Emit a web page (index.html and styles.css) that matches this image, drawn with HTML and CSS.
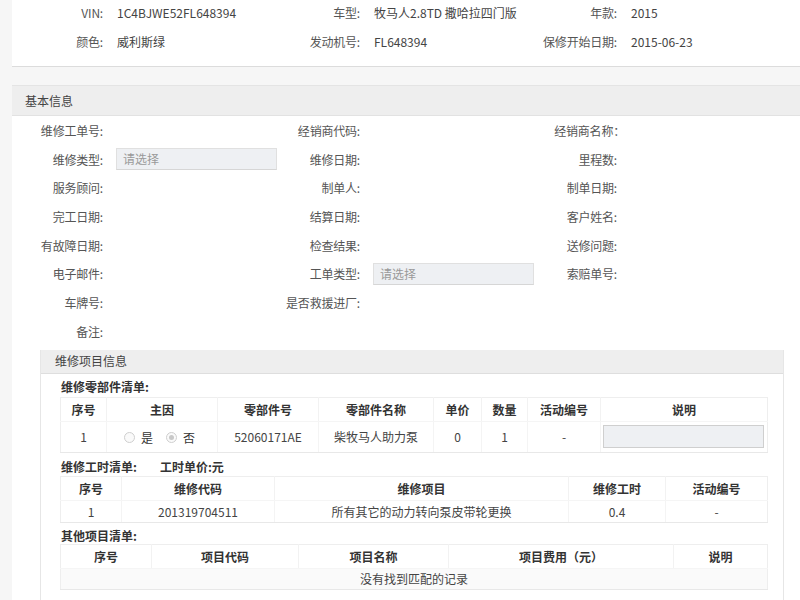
FILE: index.html
```html
<!DOCTYPE html>
<html lang="zh-CN">
<head>
<meta charset="utf-8">
<link rel="stylesheet" href="styles.css">
</head>
<body>
<div class="page">
  <div class="vehicle">
    <div class="grid3 vrow">
      <div class="field"><span class="lbl">VIN:</span><span class="val">1C4BJWE52FL648394</span></div>
      <div class="field"><span class="lbl">车型:</span><span class="val">牧马人2.8TD 撒哈拉四门版</span></div>
      <div class="field"><span class="lbl">年款:</span><span class="val">2015</span></div>
    </div>
    <div class="grid3 vrow">
      <div class="field"><span class="lbl">颜色:</span><span class="val">威利斯绿</span></div>
      <div class="field"><span class="lbl">发动机号:</span><span class="val">FL648394</span></div>
      <div class="field"><span class="lbl">保修开始日期:</span><span class="val">2015-06-23</span></div>
    </div>
  </div>

  <div class="basic">
    <div class="bar">基本信息</div>
    <div class="form">
      <div class="grid3 frow">
        <div class="field"><span class="lbl">维修工单号:</span></div>
        <div class="field"><span class="lbl">经销商代码:</span></div>
        <div class="field"><span class="lbl wide">经销商名称：</span></div>
      </div>
      <div class="grid3 frow">
        <div class="field"><span class="lbl">维修类型:</span><span class="select">请选择</span></div>
        <div class="field"><span class="lbl">维修日期:</span></div>
        <div class="field"><span class="lbl">里程数:</span></div>
      </div>
      <div class="grid3 frow">
        <div class="field"><span class="lbl">服务顾问:</span></div>
        <div class="field"><span class="lbl">制单人:</span></div>
        <div class="field"><span class="lbl">制单日期:</span></div>
      </div>
      <div class="grid3 frow">
        <div class="field"><span class="lbl">完工日期:</span></div>
        <div class="field"><span class="lbl">结算日期:</span></div>
        <div class="field"><span class="lbl">客户姓名:</span></div>
      </div>
      <div class="grid3 frow">
        <div class="field"><span class="lbl">有故障日期:</span></div>
        <div class="field"><span class="lbl">检查结果:</span></div>
        <div class="field"><span class="lbl">送修问题:</span></div>
      </div>
      <div class="grid3 frow">
        <div class="field"><span class="lbl">电子邮件:</span></div>
        <div class="field"><span class="lbl">工单类型:</span><span class="select">请选择</span></div>
        <div class="field"><span class="lbl">索赔单号:</span></div>
      </div>
      <div class="grid3 frow">
        <div class="field"><span class="lbl">车牌号:</span></div>
        <div class="field"><span class="lbl">是否救援进厂:</span></div>
        <div class="field"></div>
      </div>
      <div class="grid3 frow">
        <div class="field"><span class="lbl">备注:</span></div>
        <div class="field"></div>
        <div class="field"></div>
      </div>
    </div>

    <div class="items">
      <div class="ibar">维修项目信息</div>
      <div class="ibody">
        <div class="sub">维修零部件清单:</div>
        <table class="tbl t1">
          <colgroup><col style="width:46px"><col style="width:111px"><col style="width:101px"><col style="width:115px"><col style="width:48px"><col style="width:46px"><col style="width:73px"><col></colgroup>
          <thead><tr><th>序号</th><th>主因</th><th>零部件号</th><th>零部件名称</th><th>单价</th><th>数量</th><th>活动编号</th><th>说明</th></tr></thead>
          <tbody><tr>
            <td>1</td>
            <td><span class="radios"><span class="radio"></span><span class="rtxt">是</span><span class="radio on"></span><span class="rtxt">否</span></span></td>
            <td>52060171AE</td>
            <td>柴牧马人助力泵</td>
            <td>0</td>
            <td>1</td>
            <td>-</td>
            <td class="inp"><span class="textbox"></span></td>
          </tr></tbody>
        </table>

        <div class="sub sub2">维修工时清单:<span class="price">工时单价:元</span></div>
        <table class="tbl t2">
          <colgroup><col style="width:61px"><col style="width:153px"><col style="width:294px"><col style="width:97px"><col></colgroup>
          <thead><tr><th>序号</th><th>维修代码</th><th>维修项目</th><th>维修工时</th><th>活动编号</th></tr></thead>
          <tbody><tr><td>1</td><td>201319704511</td><td>所有其它的动力转向泵皮带轮更换</td><td>0.4</td><td>-</td></tr></tbody>
        </table>

        <div class="sub sub3">其他项目清单:</div>
        <table class="tbl t3">
          <colgroup><col style="width:91px"><col style="width:147px"><col style="width:150px"><col style="width:225px"><col></colgroup>
          <thead><tr><th>序号</th><th>项目代码</th><th>项目名称</th><th>项目费用（元）</th><th>说明</th></tr></thead>
          <tbody><tr class="empty"><td colspan="5">没有找到匹配的记录</td></tr></tbody>
        </table>
      </div>
    </div>
  </div>
</div>
</body>
</html>
```

FILE: styles.css
```css
* { box-sizing: border-box; }
html, body { margin: 0; padding: 0; }
body {
  background: #f6f6f6;
  font-family: "Noto Sans CJK SC", "Noto Sans", sans-serif;
  font-size: 12px;
  color: #333;
  width: 800px;
  height: 600px;
  overflow: hidden;
}
.page { padding-left: 12px; }

.vehicle {
  display: flow-root;
  background: #fff;
  border-bottom: 1px solid #dcdcdc;
  padding: 0 0 10px;
  height: 67px;
}
.grid3 {
  display: grid;
  grid-template-columns: 257px 257px 274px;
}
.vrow { height: 28px; align-items: center; }
.vrow:first-child { margin-top: -2px; }
.vrow + .vrow { margin-top: 1px; }
.field { display: flex; align-items: center; height: 100%; }
.lbl {
  width: 91px;
  text-align: right;
  color: #555;
  white-space: nowrap;
  flex: none;
  letter-spacing: -0.2px;
}
.lbl.wide { width: 99px; margin-right: -8px; }
.val { margin-left: 14px; color: #444; white-space: nowrap; }

.basic {
  margin-top: 18px;
  background: #fff;
}
.bar {
  height: 31px;
  line-height: 29px;
  background: #eeeeee;
  border-top: 1px solid #e4e4e4;
  border-bottom: 1px solid #e2e2e2;
  padding-left: 13px;
  color: #444;
}
.form { padding-top: 0; }
.frow { height: 28.7px; }
.select {
  flex: none;
  margin-left: 13px;
  width: 161px;
  height: 22px;
  line-height: 20px;
  background: #eef0f3;
  border: 1px solid #e0e0e0;
  border-bottom-color: #d6d6d6;
  color: #999;
  padding-left: 6px;
}

.items {
  margin: 4px 16px 0 28px;
  border-left: 1px solid #e6e6e6;
  border-right: 1px solid #e6e6e6;
  background: #fff;
  height: 260px;
}
.ibar {
  height: 24px;
  line-height: 22px;
  background: #eeeeee;
  border-bottom: 1px solid #dedede;
  padding-left: 14px;
  color: #444;
}
.ibody { padding: 0 15px 0 19px; }
.sub {
  font-weight: bold;
  color: #333;
  height: 23px;
  line-height: 25px;
  padding-left: 1px;
}
.sub2 { height: 23px; line-height: 28px; }
.sub3 { height: 21px; line-height: 26px; }
.price { margin-left: 23px; }

.tbl {
  width: 708px;
  border-collapse: collapse;
  table-layout: fixed;
  border: 1px solid #eeeeee;
}
.tbl th {
  height: 24px;
  font-weight: bold;
  color: #333;
  text-align: center;
  padding: 0;
  border-left: 1px solid #f2f2f2;
  border-bottom: 1px solid #f5f5f5;
}
.tbl th:first-child { border-left: none; }
.tbl td {
  text-align: center;
  padding: 0;
  color: #444;
  border-left: 1px solid #f4f4f4;
  border-bottom: 1px solid #e8e8e8;
}
.tbl td:first-child { border-left: none; }
.t1 td { height: 31px; }
.t2 td { height: 22px; }
.t3 td { height: 21px; background: #fafafa; }

.radios { display: inline-flex; align-items: center; padding-left: 8px; padding-top: 2px; }
.radio {
  width: 11px;
  height: 11px;
  border-radius: 50%;
  border: 1px solid #cfcfcf;
  background: #fafafa;
  position: relative;
}
.radio.on::after {
  content: "";
  position: absolute;
  left: 2px; top: 2px;
  width: 5px; height: 5px;
  border-radius: 50%;
  background: #c8c8c8;
}
.rtxt { margin: 0 13px 0 6px; color: #333; }
.inp { text-align: left; }
.textbox {
  display: block;
  margin-left: 2px;
  width: 161px;
  height: 23px;
  background: #eef0f3;
  border: 1px solid #cfcfcf;
}
```
